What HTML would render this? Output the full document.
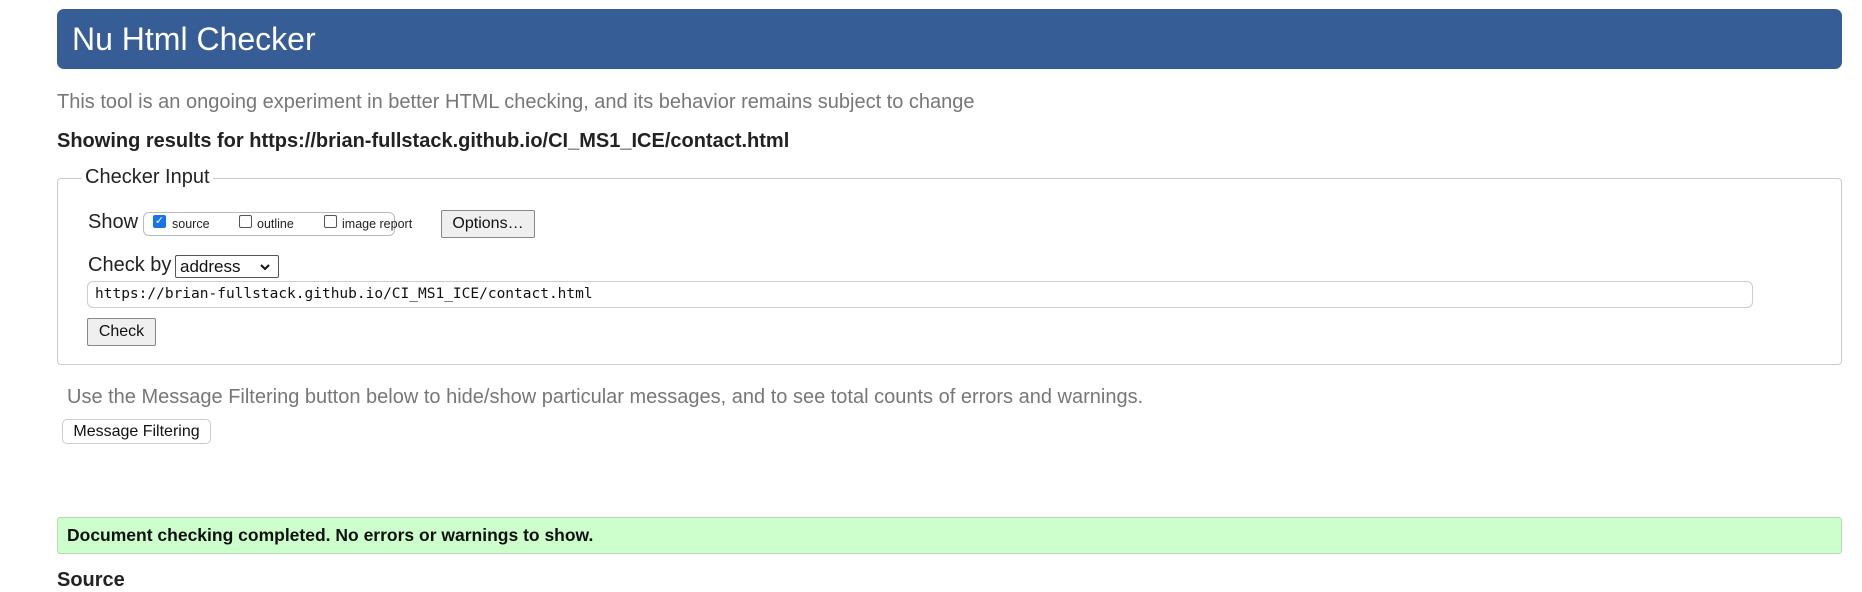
<!DOCTYPE html>
<html><head><meta charset="utf-8"><style>
*{box-sizing:border-box}
body{margin:0;width:1862px;height:577px;overflow:hidden;background:#fff;font-family:"Liberation Sans",Arial,sans-serif;position:relative}
.a{position:absolute;white-space:nowrap}
.hdr{left:57px;top:9px;width:1785px;height:60px;background:#365d95;border-radius:7px;color:#fff;font-size:32px;line-height:60px;padding-left:15px}
.gray{color:#777}
.btn{border:1px solid #888;background:#efefef;border-radius:2px;font-size:16px;text-align:center;color:#111}
.cb{position:absolute;top:4px;width:13px;height:13px;border:1px solid #555;border-radius:2px;background:#fff}
.lb{position:absolute;top:1px}
</style></head><body>
<div class="a hdr">Nu Html Checker</div>
<div class="a gray" style="left:57px;top:91px;font-size:20px">This tool is an ongoing experiment in better HTML checking, and its behavior remains subject to change</div>
<div class="a" style="left:57px;top:130px;font-size:20px;font-weight:bold;color:#222">Showing results for https://brian-fullstack.github.io/CI_MS1_ICE/contact.html</div>
<div class="a" style="left:57px;top:178px;width:1785px;height:187px;border:1px solid #ccc;border-radius:4px"></div>
<div class="a" style="left:82px;top:166px;font-size:20px;background:#fff;padding:0 3px;color:#222">Checker Input</div>
<div class="a" style="left:88px;top:211px;font-size:20px;color:#222">Show</div>
<div class="a" style="left:143px;top:212px;width:252px;height:24px;border:1px solid #bbb;border-radius:6px;font-size:12.5px;line-height:20px;color:#222">
<span class="cb" style="left:9px;top:2px;background:#1a73e8;border-color:#1a73e8;color:#fff;font-size:11px;line-height:11px;text-align:center">✓</span><span class="lb" style="left:28px">source</span>
<span class="cb" style="left:95px;top:2px"></span><span class="lb" style="left:113px">outline</span>
<span class="cb" style="left:180px;top:2px"></span><span class="lb" style="left:198px">image report</span></div>
<div class="a btn" style="left:441px;top:210px;width:94px;height:28px;line-height:26px">Options…</div>
<div class="a" style="left:88px;top:254px;font-size:20px;color:#222">Check by</div>
<div class="a" style="left:175px;top:255px;width:104px;height:23px;border:1px solid #555;border-radius:2px;font-size:17px;line-height:21px;padding-left:4px;color:#111">address<svg style="position:absolute;right:8px;top:8px" width="10" height="7" viewBox="0 0 10 7"><path d="M1 1L5 5L9 1" fill="none" stroke="#111" stroke-width="2"/></svg></div>
<div class="a" style="left:87px;top:281px;width:1666px;height:27px;border:1px solid #ccc;border-radius:6px;font-family:'DejaVu Sans Mono','Liberation Mono',monospace;font-size:14.5px;line-height:25px;padding-left:7px;color:#111">https://brian-fullstack.github.io/CI_MS1_ICE/contact.html</div>
<div class="a btn" style="left:87px;top:318px;width:69px;height:28px;line-height:26px">Check</div>
<div class="a gray" style="left:67px;top:386px;font-size:20px">Use the Message Filtering button below to hide/show particular messages, and to see total counts of errors and warnings.</div>
<div class="a" style="left:62px;top:419px;width:149px;height:25px;border:1px solid #ccc;border-radius:5px;font-size:16px;line-height:23px;text-align:center;color:#111">Message Filtering</div>
<div class="a" style="left:57px;top:517px;width:1785px;height:37px;background:#ccffcc;border:1px solid #b5d9b5;border-radius:3px;font-size:17.5px;font-weight:bold;line-height:35px;padding-left:9px;color:#111">Document checking completed. No errors or warnings to show.</div>
<div class="a" style="left:57px;top:569px;font-size:20px;font-weight:bold;color:#222">Source</div>
</body></html>
